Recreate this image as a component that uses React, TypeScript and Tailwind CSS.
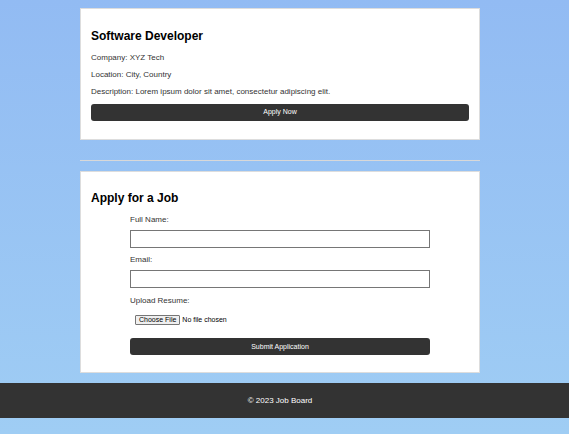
const App = () => {
  return (
    <div className="min-h-screen bg-linear-to-b from-[#92bbf3] to-[#9fcdf4] font-['Liberation_Sans',Arial,sans-serif] text-[#333] pt-[8px] pb-[16px]">
      <div className="w-[400px] ml-[80px]">
        {/* job listing */}
        <div className="bg-white border border-[#ddd] px-[10px] pt-[20px] pb-[18px]">
          <h2 className="text-[12px] leading-[15px] font-bold text-black">
            Software Developer
          </h2>
          <p className="text-[8px] leading-[10px] mt-[9px]">Company: XYZ Tech</p>
          <p className="text-[8px] leading-[10px] mt-[7px]">Location: City, Country</p>
          <p className="text-[8px] leading-[10px] mt-[7px]">
            Description: Lorem ipsum dolor sit amet, consectetur adipiscing elit.
          </p>
          <button className="mt-[7px] w-full h-[17px] bg-[#333] text-white text-[7px] rounded-[3px]">
            Apply Now
          </button>
        </div>

        <hr className="mt-[20px] mb-[10px] border-t border-[#d8d8d8]" />

        {/* application form */}
        <div className="bg-white border border-[#ddd] px-[10px] pt-[19px] pb-[17px]">
          <h2 className="text-[12px] leading-[15px] font-bold text-black">
            Apply for a Job
          </h2>
          <form className="w-[300px] mx-auto mt-[9px] flex flex-col">
            <label className="text-[8px] leading-[10px]">Full Name:</label>
            <input
              type="text"
              className="mt-[5px] h-[18px] border border-[#767676] bg-white"
            />
            <label className="text-[8px] leading-[10px] mt-[7px]">Email:</label>
            <input
              type="email"
              className="mt-[5px] h-[18px] border border-[#767676] bg-white"
            />
            <label className="text-[8px] leading-[10px] mt-[8px]">Upload Resume:</label>
            <div className="mt-[9px] ml-[5px] flex items-center text-[7px] leading-[8px] text-black">
              <span className="h-[10px] px-[3px] flex items-center border border-[#767676] bg-[#efefef] rounded-[1px]">
                Choose File
              </span>
              <span className="ml-[2px]">No file chosen</span>
            </div>
            <button
              type="button"
              className="mt-[13px] w-full h-[17px] bg-[#333] text-white text-[7px] rounded-[3px]"
            >
              Submit Application
            </button>
          </form>
        </div>
      </div>

      <footer className="mt-[10px] h-[35px] pr-[9px] bg-[#333] text-white text-[8px] flex items-center justify-center">
        © 2023 Job Board
      </footer>
    </div>
  );
};

export default App;
